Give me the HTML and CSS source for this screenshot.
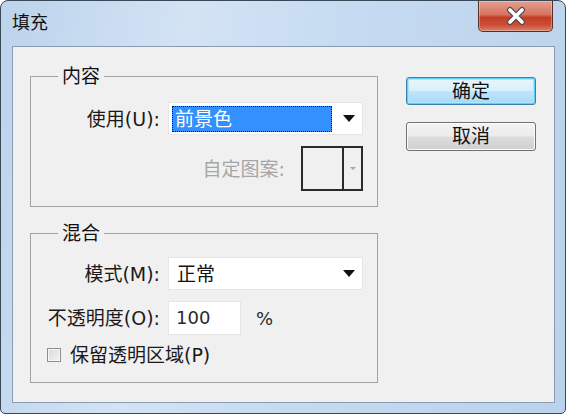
FILE: index.html
```html
<!DOCTYPE html>
<html lang="zh">
<head>
<meta charset="utf-8">
<title>填充</title>
<link rel="stylesheet" href="styles.css">
</head>
<body>
<div class="window">
  <div class="titlebar">
    <div class="title">填充</div>
    <div class="close">
      <svg width="26" height="20" viewBox="0 0 26 20">
        <path d="M7 4 L19 16 M19 4 L7 16" stroke="#4a4a4a" stroke-width="6" stroke-linecap="round"/>
        <path d="M7 4 L19 16 M19 4 L7 16" stroke="#ffffff" stroke-width="3.6" stroke-linecap="round"/>
      </svg>
    </div>
  </div>
  <div class="client">
    <div class="groups">
      <fieldset class="group g1">
        <legend>内容</legend>
        <div class="grid">
          <label class="lbl">使用(U):</label>
          <div class="select">
            <span class="sel-text focused">前景色</span>
            <span class="arrow"></span>
          </div>
          <div class="pattern-row">
            <span class="lbl disabled">自定图案:</span>
            <div class="pattern">
              <div class="swatch"></div>
              <div class="pat-btn"><span class="arrow small"></span></div>
            </div>
          </div>
        </div>
      </fieldset>
      <fieldset class="group g2">
        <legend>混合</legend>
        <div class="grid">
          <label class="lbl">模式(M):</label>
          <div class="select mode">
            <span class="sel-text">正常</span>
            <span class="arrow"></span>
          </div>
          <label class="lbl">不透明度(O):</label>
          <div class="opacity-row">
            <div class="input">100</div>
            <span class="pct">%</span>
          </div>
          <div class="check-row">
            <span class="checkbox"></span>
            <span class="check-label">保留透明区域(P)</span>
          </div>
        </div>
      </fieldset>
    </div>
    <div class="buttons">
      <div class="btn default">确定</div>
      <div class="btn">取消</div>
    </div>
  </div>
</div>
</body>
</html>
```
FILE: styles.css
```css
* { box-sizing: border-box; }
html, body { margin: 0; padding: 0; }
body {
  width: 566px;
  height: 414px;
  overflow: hidden;
  background: #ffffff;
  font-family: "DejaVu Sans", "Noto Sans CJK SC", sans-serif;
  color: #1a1a1a;
}
.window {
  width: 566px;
  height: 414px;
  border: 1px solid #3b4858;
  border-radius: 8px 8px 5px 5px;
  background: linear-gradient(100deg, #bcd3ec 0%, #d3e3f4 30%, #c6dbf1 55%, #bad2ec 100%);
  display: flex;
  flex-direction: column;
  overflow: hidden;
}
.titlebar {
  height: 45px;
  display: flex;
  justify-content: space-between;
  align-items: flex-start;
  flex-shrink: 0;
}
.title {
  font-size: 18px;
  line-height: 22px;
  margin: 11px 0 0 11px;
  color: #111;
}
.close {
  width: 75px;
  height: 31px;
  margin-right: 12px;
  border: 1px solid #5b2f28;
  border-top: none;
  border-radius: 0 0 5px 5px;
  background: linear-gradient(180deg, #e2a090 0%, #d77461 45%, #c23c26 55%, #cc4e36 80%, #dc8068 100%);
  display: flex;
  align-items: center;
  justify-content: center;
  box-shadow: inset 0 0 0 1px rgba(255,255,255,0.3);
}
.client {
  flex: 1;
  margin: 0 10px 10px 11px;
  border: 1px solid #8b9bb0;
  background: #f0f0f0;
  display: flex;
  padding: 18px 0 0 17px;
  gap: 28px;
}
.groups {
  width: 348px;
  display: flex;
  flex-direction: column;
  gap: 15px;
}
.group {
  margin: 0;
  border: 1px solid #a2a2a2;
  padding: 0;
  min-width: 0;
}
.group legend {
  font-size: 19px;
  line-height: 22px;
  padding: 0 4px;
  margin-left: 27px;
  color: #111;
}
.g1 { height: 142px; padding-top: 15px; }
.g2 { height: 161px; padding-top: 13px; }
.grid {
  display: grid;
  grid-template-columns: 129px 195px;
  column-gap: 8px;
  align-items: center;
}
.g1 .grid { row-gap: 11px; }
.g2 .grid { row-gap: 11px; }
.lbl {
  font-size: 19px;
  line-height: 24px;
  text-align: right;
  color: #1a1a1a;
  white-space: nowrap;
}
.lbl.disabled { color: #a6a6a6; }
.select {
  height: 33px;
  background: #ffffff;
  border: 1px solid #e6e6e6;
  display: flex;
  align-items: center;
  padding: 0 6px 0 3px;
  gap: 11px;
}
.sel-text {
  font-size: 19px;
  line-height: 26px;
  height: 26px;
  padding: 0 3px;
  flex: 1;
  color: #111;
}
.sel-text.focused {
  background: #3390ff;
  color: #ffffff;
  outline: 1px dotted #1a1a1a;
  outline-offset: -1px;
}
.mode .sel-text { padding-left: 5px; }
.arrow {
  width: 0;
  height: 0;
  border-left: 6px solid transparent;
  border-right: 6px solid transparent;
  border-top: 7px solid #111;
  margin-right: 1px;
}
.arrow.small {
  border-left-width: 3px;
  border-right-width: 3px;
  border-top: 3px solid #a8a8a8;
  margin: 0;
}
.pattern-row {
  grid-column: 1 / 3;
  display: flex;
  justify-content: flex-end;
  align-items: center;
  gap: 16px;
}
.pattern {
  width: 62px;
  height: 45px;
  border: 2px solid #2a2a2a;
  display: flex;
  background: #f0f0f0;
}
.swatch { flex: 1; border-right: 2px solid #2a2a2a; }
.pat-btn {
  width: 17px;
  display: flex;
  align-items: center;
  justify-content: center;
}
.opacity-row {
  display: flex;
  align-items: center;
  gap: 15px;
}
.input {
  width: 73px;
  height: 34px;
  background: #ffffff;
  border: 1px solid #e6e6e6;
  font-size: 18px;
  line-height: 32px;
  padding-left: 7px;
  color: #2a2a2a;
}
.pct {
  font-size: 18px;
  color: #2a2a2a;
}
.check-row {
  grid-column: 1 / 3;
  display: flex;
  align-items: center;
  padding-left: 16px;
  gap: 9px;
  margin-top: -3px;
}
.checkbox {
  width: 14px;
  height: 14px;
  border: 1px solid #8e8f8f;
  background: linear-gradient(135deg, #d8d8d8 0%, #f4f4f4 100%);
  box-shadow: inset 0 0 0 1px #f6f6f6;
}
.check-label {
  font-size: 19px;
  line-height: 24px;
  color: #1a1a1a;
}
.buttons {
  width: 130px;
  display: flex;
  flex-direction: column;
  gap: 17px;
  margin-top: 12px;
}
.btn {
  height: 28px;
  border: 1px solid #707070;
  border-radius: 3px;
  background: linear-gradient(180deg, #f4f4f4 0%, #ebebeb 48%, #dcdcdc 52%, #d0d0d0 100%);
  box-shadow: inset 0 0 0 1px #fcfcfc;
  font-size: 19px;
  line-height: 26px;
  text-align: center;
  color: #111;
}
.btn.default {
  height: 28px;
  border-color: #3c7fb1;
  background: linear-gradient(180deg, #eaf6fd 0%, #d9f0fc 48%, #bee6fd 52%, #a7d9f5 100%);
  box-shadow: inset 0 0 0 1px #5fd0f5, inset 0 0 0 2px #a8e6fb;
}
.btn + .btn { height: 29px; }
```
